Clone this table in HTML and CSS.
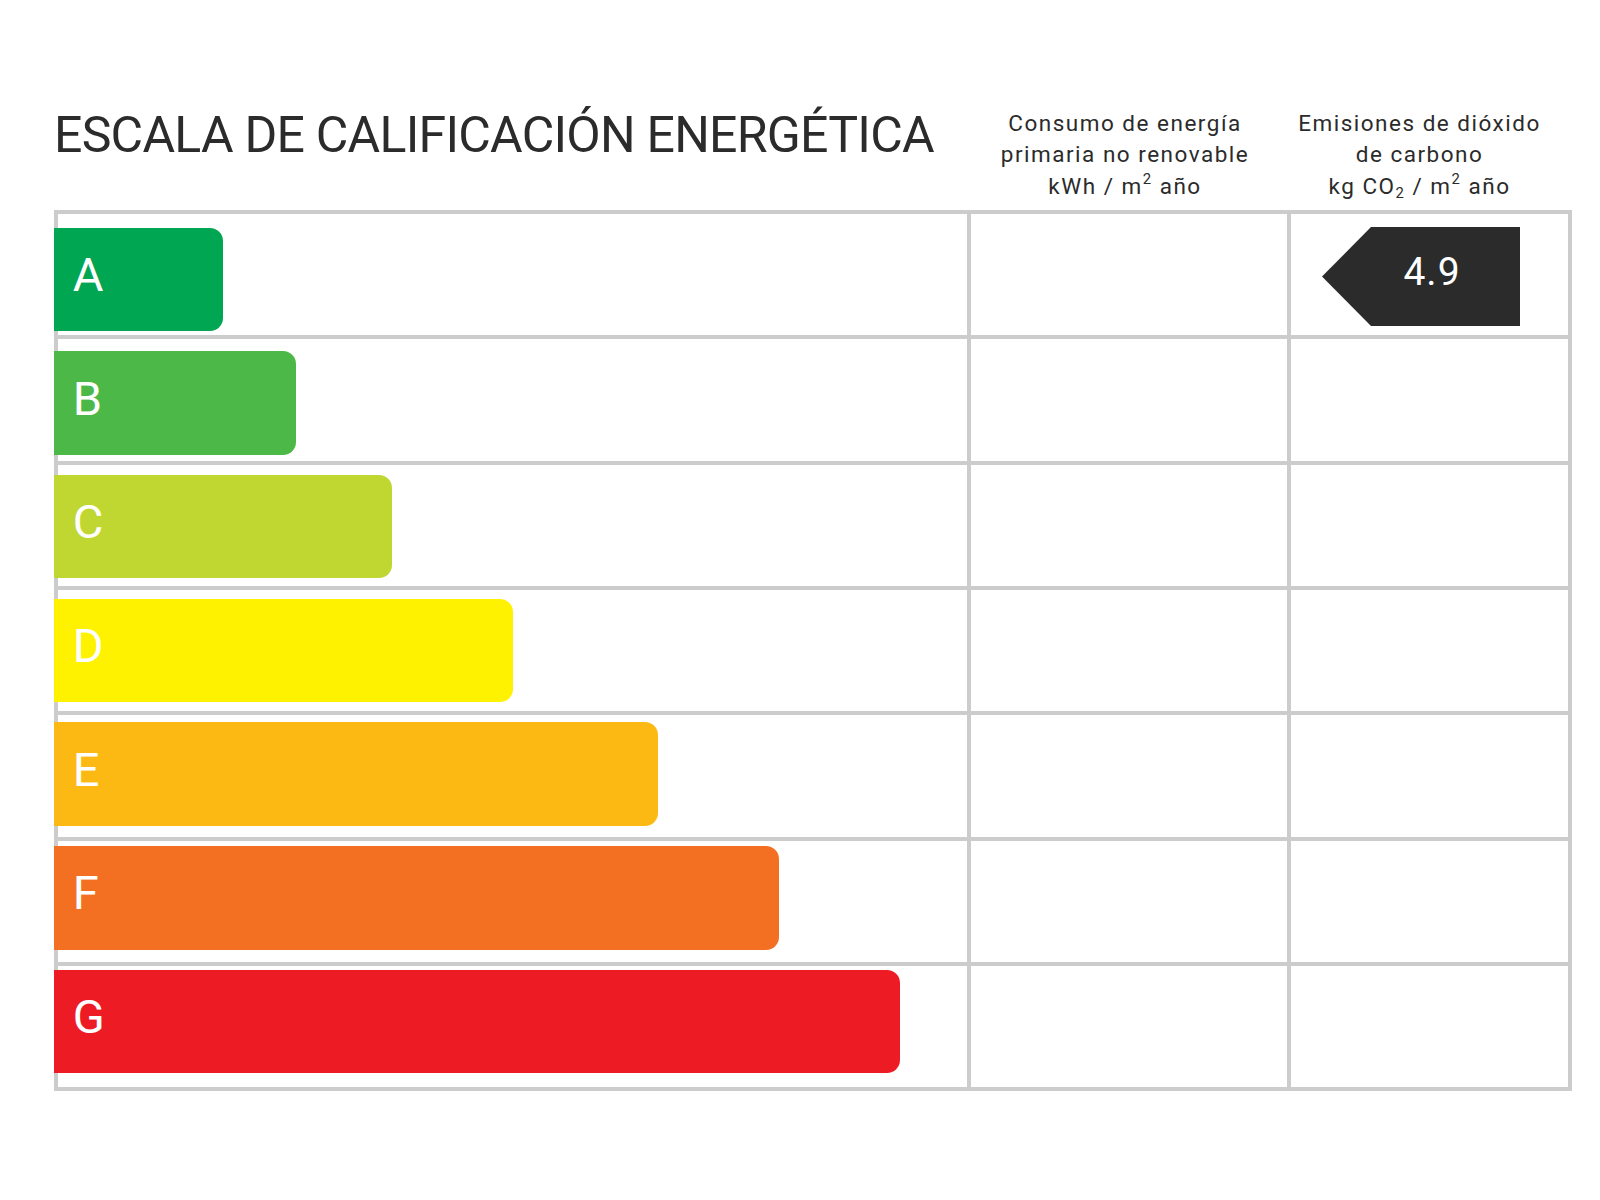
FILE: index.html
```html
<!DOCTYPE html>
<html lang="es">
<head>
<meta charset="utf-8">
<title>Escala de calificación energética</title>
<link rel="stylesheet" href="styles.css">
</head>
<body>
<div class="page">
  <div class="head">
    <h1 class="title">ESCALA DE CALIFICACIÓN ENERGÉTICA</h1>
    <div class="colhead colhead-energy">Consumo de energía<br>primaria no renovable<br>kWh / m<sup>2</sup> año</div>
    <div class="colhead colhead-co2">Emisiones de dióxido<br>de carbono<br>kg CO<sub>2</sub> / m<sup>2</sup> año</div>
  </div>
  <div class="chart-wrap">
    <div class="chart">
      <div class="cell"></div><div class="cell"></div><div class="cell cell-badge"><div class="badge">4.9</div></div>
      <div class="cell"></div><div class="cell"></div><div class="cell"></div>
      <div class="cell"></div><div class="cell"></div><div class="cell"></div>
      <div class="cell"></div><div class="cell"></div><div class="cell"></div>
      <div class="cell"></div><div class="cell"></div><div class="cell"></div>
      <div class="cell"></div><div class="cell"></div><div class="cell"></div>
      <div class="cell"></div><div class="cell"></div><div class="cell"></div>
    </div>
    <div class="bars">
      <div class="bar bar-a" style="width:169px">A</div>
      <div class="bar bar-b" style="width:242px">B</div>
      <div class="bar bar-c" style="width:338px">C</div>
      <div class="bar bar-d" style="width:459px">D</div>
      <div class="bar bar-e" style="width:604px">E</div>
      <div class="bar bar-f" style="width:725px">F</div>
      <div class="bar bar-g" style="width:846px">G</div>
    </div>
  </div>
</div>
</body>
</html>
```
FILE: styles.css
```css
html, body {
  margin: 0;
  padding: 0;
  background: #ffffff;
}

body {
  font-family: Roboto, "Liberation Sans", sans-serif;
  color: #2b2b2b;
}

.page {
  width: 1518px;
  padding: 105px 0 0 54px;
}

.head {
  display: grid;
  grid-template-columns: 913px 320px 285px;
  align-items: start;
  margin-bottom: 8px;
}

.title {
  margin: 0;
  font-size: 50px;
  line-height: 60px;
  font-weight: 400;
  letter-spacing: -0.75px;
  white-space: nowrap;
  color: #2b2b2b;
}

.colhead {
  margin-top: 2.6px;
  font-size: 22.5px;
  line-height: 31.5px;
  text-align: center;
  letter-spacing: 1.5px;
  white-space: nowrap;
  color: #2b2b2b;
}

.colhead-energy {
  padding-right: 4px;
}

.colhead-co2 {
  padding-right: 20px;
}

.colhead sup,
.colhead sub {
  font-size: 0.66em;
  line-height: 0;
  position: relative;
  vertical-align: baseline;
  letter-spacing: 0;
  margin-right: 1.5px;
}

.colhead sup {
  top: -0.65em;
}

.colhead sub {
  top: 0.3em;
}

.chart-wrap {
  display: grid;
}

.chart,
.bars {
  grid-area: 1 / 1;
}

.chart {
  box-sizing: border-box;
  height: 881px;
  display: grid;
  grid-template-columns: 909px 316px 277px;
  grid-template-rows: repeat(7, 1fr);
  gap: 4px;
  padding: 4px;
  background: #cccccc;
}

.cell {
  background: #ffffff;
}

.cell-badge {
  display: flex;
  align-items: flex-start;
}

.badge {
  box-sizing: border-box;
  width: 198px;
  height: 99px;
  margin: 13px 0 0 31px;
  padding: 25.9px 0 0 22px;
  background: #2b2b2b;
  clip-path: polygon(0 50%, 49px 0, 100% 0, 100% 100%, 49px 100%);
  color: #ffffff;
  font-size: 39px;
  line-height: 39px;
  text-align: center;
  letter-spacing: 1px;
}

.bars {
  align-self: start;
  padding-top: 17.5px;
  display: flex;
  flex-direction: column;
  gap: 20.2px;
}

.bar {
  box-sizing: border-box;
  height: 103.5px;
  padding: 23.4px 0 0 18.7px;
  border-radius: 0 13px 13px 0;
  color: #ffffff;
  font-size: 47px;
  line-height: 47px;
}

.bar-a { background: #00a651; }
.bar-b { background: #4cb848; }
.bar-c { background: #bfd730; }
.bar-d { background: #fff200; }
.bar-e { background: #fdb913; }
.bar-f { background: #f37022; }
.bar-g { background: #ed1c24; }
```
